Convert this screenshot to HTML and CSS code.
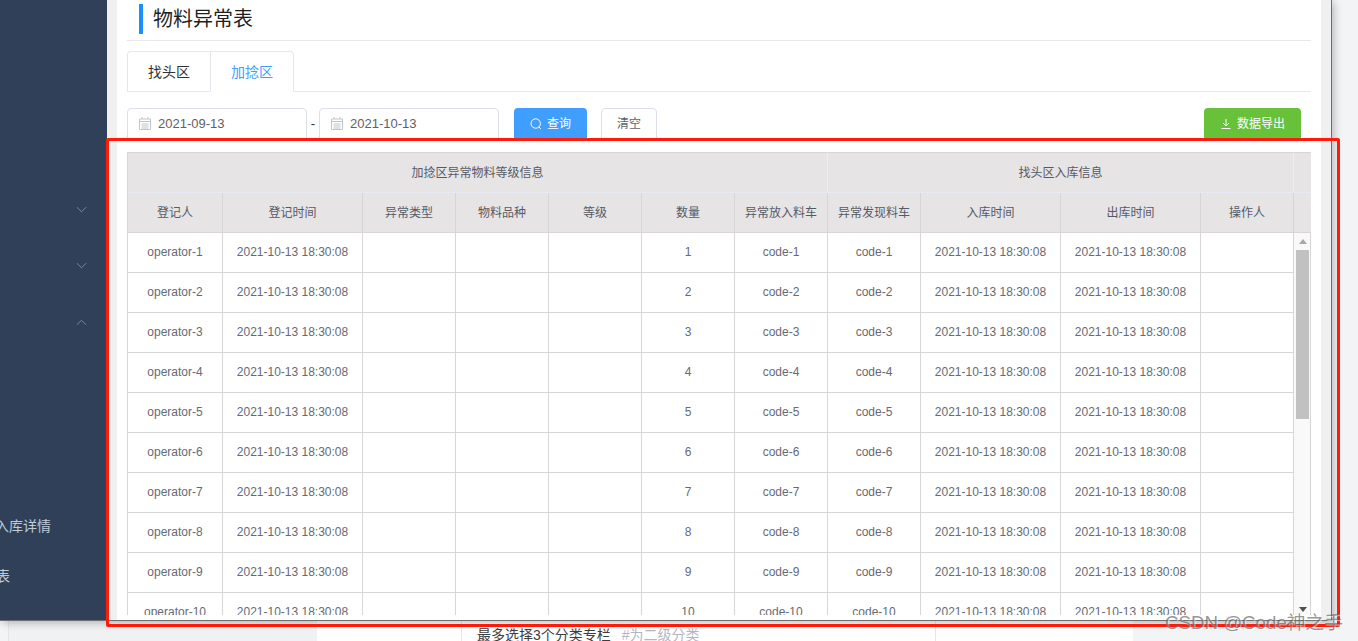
FILE: index.html
```html
<!DOCTYPE html>
<html lang="zh-CN">
<head>
<meta charset="utf-8">
<title>物料异常表</title>
<link rel="stylesheet" href="styles.css">
</head>
<body>
<div class="window">
  <aside class="sidebar">
    <div class="menu-row"><svg class="chev" viewBox="0 0 12 7"><path d="M1 1l5 5 5-5"/></svg></div>
    <div class="menu-row"><svg class="chev" viewBox="0 0 12 7"><path d="M1 1l5 5 5-5"/></svg></div>
    <div class="menu-row"><svg class="chev" viewBox="0 0 12 7"><path d="M1 6l5-5 5 5"/></svg></div>
    <div class="menu-spacer"></div>
    <div class="sub-row sub-long">入库详情</div>
    <div class="sub-row sub-short">表</div>
  </aside>
  <main class="panel">
    <div class="title-bar"><h1 class="title">物料异常表</h1></div>
    <div class="tabs">
      <div class="tab">找头区</div>
      <div class="tab tab-active">加捻区</div>
    </div>
    <div class="filters">
      <div class="date-input">
        <svg class="cal" viewBox="0 0 12 13"><path d="M.5 2h11v10.500h-11zM.5 4.500h11M3 0v2M9 0v2M2.500 7h7M2.500 9h7M2.500 11h7"/></svg>
        <span>2021-09-13</span>
      </div>
      <span class="dash">-</span>
      <div class="date-input">
        <svg class="cal" viewBox="0 0 12 13"><path d="M.5 2h11v10.500h-11zM.5 4.500h11M3 0v2M9 0v2M2.500 7h7M2.500 9h7M2.500 11h7"/></svg>
        <span>2021-10-13</span>
      </div>
      <button class="btn btn-primary"><svg class="btn-icon" viewBox="0 0 12 12"><circle cx="5.700" cy="5.500" r="4.700"/><path d="M9 9l1.800 2"/></svg>查询</button>
      <button class="btn btn-plain">清空</button>
      <button class="btn btn-success"><svg class="btn-icon" viewBox="0 0 12 12"><path d="M6 1v6.500M3 5l3 3 3-3M1.500 10.500h9"/></svg>数据导出</button>
    </div>
    <div class="grid">
      <table class="tbl tbl-head">
        <colgroup>
          <col class="c-op"><col class="c-time"><col class="c-n"><col class="c-n"><col class="c-n"><col class="c-n"><col class="c-n"><col class="c-n"><col class="c-time"><col class="c-time"><col class="c-n"><col class="c-gut">
        </colgroup>
        <tr class="group-row">
          <th colspan="7">加捻区异常物料等级信息</th>
          <th colspan="4">找头区入库信息</th>
          <th></th>
        </tr>
        <tr>
          <th>登记人</th><th>登记时间</th><th>异常类型</th><th>物料品种</th><th>等级</th><th>数量</th><th>异常放入料车</th><th>异常发现料车</th><th>入库时间</th><th>出库时间</th><th>操作人</th><th class="gut-cell"></th>
        </tr>
      </table>
      <div class="body-wrap">
        <table class="tbl tbl-body">
          <colgroup>
            <col class="c-op"><col class="c-time"><col class="c-n"><col class="c-n"><col class="c-n"><col class="c-n"><col class="c-n"><col class="c-n"><col class="c-time"><col class="c-time"><col class="c-n">
          </colgroup>
          <tr><td>operator-1</td><td>2021-10-13 18:30:08</td><td></td><td></td><td></td><td>1</td><td>code-1</td><td>code-1</td><td>2021-10-13 18:30:08</td><td>2021-10-13 18:30:08</td><td></td></tr>
          <tr><td>operator-2</td><td>2021-10-13 18:30:08</td><td></td><td></td><td></td><td>2</td><td>code-2</td><td>code-2</td><td>2021-10-13 18:30:08</td><td>2021-10-13 18:30:08</td><td></td></tr>
          <tr><td>operator-3</td><td>2021-10-13 18:30:08</td><td></td><td></td><td></td><td>3</td><td>code-3</td><td>code-3</td><td>2021-10-13 18:30:08</td><td>2021-10-13 18:30:08</td><td></td></tr>
          <tr><td>operator-4</td><td>2021-10-13 18:30:08</td><td></td><td></td><td></td><td>4</td><td>code-4</td><td>code-4</td><td>2021-10-13 18:30:08</td><td>2021-10-13 18:30:08</td><td></td></tr>
          <tr><td>operator-5</td><td>2021-10-13 18:30:08</td><td></td><td></td><td></td><td>5</td><td>code-5</td><td>code-5</td><td>2021-10-13 18:30:08</td><td>2021-10-13 18:30:08</td><td></td></tr>
          <tr><td>operator-6</td><td>2021-10-13 18:30:08</td><td></td><td></td><td></td><td>6</td><td>code-6</td><td>code-6</td><td>2021-10-13 18:30:08</td><td>2021-10-13 18:30:08</td><td></td></tr>
          <tr><td>operator-7</td><td>2021-10-13 18:30:08</td><td></td><td></td><td></td><td>7</td><td>code-7</td><td>code-7</td><td>2021-10-13 18:30:08</td><td>2021-10-13 18:30:08</td><td></td></tr>
          <tr><td>operator-8</td><td>2021-10-13 18:30:08</td><td></td><td></td><td></td><td>8</td><td>code-8</td><td>code-8</td><td>2021-10-13 18:30:08</td><td>2021-10-13 18:30:08</td><td></td></tr>
          <tr><td>operator-9</td><td>2021-10-13 18:30:08</td><td></td><td></td><td></td><td>9</td><td>code-9</td><td>code-9</td><td>2021-10-13 18:30:08</td><td>2021-10-13 18:30:08</td><td></td></tr>
          <tr><td>operator-10</td><td>2021-10-13 18:30:08</td><td></td><td></td><td></td><td>10</td><td>code-10</td><td>code-10</td><td>2021-10-13 18:30:08</td><td>2021-10-13 18:30:08</td><td></td></tr>
        </table>
        <div class="scrollbar">
          <div class="arrow-up"></div>
          <div class="thumb"></div>
          <div class="arrow-down"></div>
        </div>
      </div>
    </div>
  </main>
  <div class="gutter-right"></div>
</div>
<div class="under">
  <div class="under-left"></div>
  <div class="under-mid">
    <div class="under-cell"><span class="under-text">最多选择3个分类专栏</span><span class="under-hint">#为二级分类</span></div>
  </div>
  <div class="under-right"></div>
</div>
<div class="red-box"></div>
<div class="watermark">CSDN @Code神之手</div>
</body>
</html>
```
FILE: styles.css
```css
* { box-sizing: border-box; }
html, body { margin: 0; padding: 0; height: 641px; overflow: hidden; }
body {
  position: relative;
  background: #f3f4f6;
  font-family: "Liberation Sans", "Noto Sans CJK SC", sans-serif;
  color: #606266;
}
.window {
  display: flex;
  width: 1332px;
  height: 621px;
  background: #f0f0f0;
  border-right: 1px solid #6f6f6f;
  border-bottom: 1px solid #6f6f6f;
  box-shadow: 2px 2px 8px rgba(0, 0, 0, .25);
  position: relative;
  z-index: 1;
}
.sidebar {
  width: 107px;
  flex: none;
  background: #304058;
  padding-top: 181px;
  display: flex;
  flex-direction: column;
  overflow: hidden;
  color: #bfcbd9;
  font-size: 14px;
}
.menu-row {
  height: 56.500px;
  flex: none;
  display: flex;
  align-items: center;
  justify-content: flex-end;
  padding-right: 20px;
}
.chev { width: 11px; height: 7px; fill: none; stroke: #8090a2; stroke-width: 1; }
.menu-spacer { height: 149px; flex: none; }
.sub-row {
  height: 50px;
  flex: none;
  display: flex;
  align-items: center;
  justify-content: flex-end;
  white-space: nowrap;
}
.sub-long { padding-right: 56px; }
.sub-short { padding-right: 97px; }
.panel {
  width: 1204px;
  flex: none;
  margin-left: 10px;
  padding: 0 10px;
  background: #fff;
  min-width: 0;
}
.gutter-right { flex: 1; }
.title-bar {
  height: 41px;
  padding: 4px 0 0 12px;
  border-bottom: 1px solid #e8e8e8;
}
.title {
  margin: 0;
  height: 30px;
  line-height: 30px;
  font-size: 20px;
  font-weight: 400;
  color: #1f1f1f;
  padding-left: 10px;
  border-left: 4px solid #1890ff;
}
.tabs {
  display: flex;
  margin-top: 10px;
  height: 41px;
  border-bottom: 1px solid #e4e7ed;
}
.tab {
  width: 83px;
  height: 41px;
  line-height: 41px;
  text-align: center;
  font-size: 14px;
  color: #303133;
  border: 1px solid #e4e7ed;
  border-right: 0;
  border-bottom: 1px solid #e4e7ed;
}
.tab:first-child { border-top-left-radius: 4px; }
.tab-active {
  width: 84px;
  color: #409eff;
  border-right: 1px solid #e4e7ed;
  border-bottom-color: #fff;
  border-top-right-radius: 4px;
}
.filters {
  display: flex;
  align-items: flex-start;
  margin-top: 16px;
  height: 30px;
  overflow: hidden;
}
.date-input {
  width: 180px;
  height: 40px;
  flex: none;
  display: flex;
  align-items: flex-start;
  padding: 7px 0 0 11px;
  border: 1px solid #dcdfe6;
  border-radius: 4px;
  font-size: 13px;
  line-height: 15px;
  color: #606266;
}
.cal {
  width: 12px;
  height: 13px;
  margin: 1px 7px 0 0;
  fill: none;
  stroke: #c0c4cc;
  stroke-width: 1;
}
.dash {
  width: 12px;
  flex: none;
  text-align: center;
  font-size: 13px;
  line-height: 32px;
  color: #303133;
}
.btn {
  height: 40px;
  flex: none;
  display: flex;
  align-items: flex-start;
  justify-content: center;
  padding: 8px 0 0;
  border-radius: 4px;
  font-family: inherit;
  font-size: 12px;
  line-height: 14px;
  border: 1px solid transparent;
}
.btn-primary { width: 73px; margin-left: 15px; background: #409eff; color: #fff; }
.btn-plain { width: 56px; margin-left: 14px; background: #fff; color: #606266; border-color: #dcdfe6; }
.btn-success { width: 97px; margin-left: auto; margin-right: 10px; background: #67c23a; color: #fff; }
.btn-icon {
  width: 12px;
  height: 12px;
  margin: 1px 5px 0 0;
  fill: none;
  stroke: #fff;
  stroke-width: 1;
}
.grid {
  width: 1184px;
  margin-top: 14px;
  border-left: 1px solid #d8d5d7;
  border-right: 1px solid #d8d5d7;
  border-top: 1px solid #d8d5d7;
}
.tbl {
  border-collapse: separate;
  border-spacing: 0;
  table-layout: fixed;
  font-size: 12px;
}
.tbl-head { width: 1182px; }
.tbl-body { width: 1166px; flex: none; }
.c-op { width: 95px; }
.c-time { width: 140px; }
.c-n { width: 93px; }
.c-gut { width: 17px; }
.tbl th, .tbl td {
  padding: 0 0 2px;
  height: 40px;
  text-align: center;
  font-weight: 400;
  overflow: hidden;
  white-space: nowrap;
  border-right: 1px solid #d8d5d7;
  border-bottom: 1px solid #d8d5d7;
}
.tbl th { background: #e6e4e5; color: #565a66; }
.group-row th { border-right-color: #eceef6; border-bottom-color: #e6e9f3; }
.tbl th:last-child { border-right: 0; }
.tbl td { color: #666a73; background: #fff; }
.body-wrap {
  display: flex;
  height: 382px;
  overflow: hidden;
}
.scrollbar {
  width: 16px;
  flex: none;
  background: #f9f9f9;
  padding: 6px 1px 0 2px;
  display: flex;
  flex-direction: column;
  align-items: center;
  margin-left: auto;
}
.arrow-up {
  width: 0;
  height: 0;
  border-left: 4px solid transparent;
  border-right: 4px solid transparent;
  border-bottom: 5px solid #a8a8a8;
}
.thumb {
  width: 13px;
  height: 169px;
  background: #c1c1c1;
  margin-top: 6px;
}
.arrow-down {
  width: 0;
  height: 0;
  margin-top: 188px;
  border-left: 4px solid transparent;
  border-right: 4px solid transparent;
  border-top: 5px solid #505050;
}
.under {
  display: flex;
  height: 20px;
  overflow: hidden;
}
.under-left {
  width: 309px;
  flex: none;
  background: #f0f1f3;
  border-left: 1px solid #e4e4e4;
  margin-left: 8px;
}
.under-mid {
  width: 816px;
  flex: none;
  background: #fff;
  padding-left: 144px;
}
.under-cell {
  width: 475px;
  height: 20px;
  border-left: 1px solid #e8e8e8;
  border-right: 1px solid #e8e8e8;
  padding: 6px 0 0 15px;
  font-size: 14px;
  line-height: 16px;
  white-space: nowrap;
}
.under-text { color: #3d3d3d; }
.under-hint { color: #b5b5c0; margin-left: 11px; }
.under-right { flex: 1; }
.red-box {
  position: absolute;
  left: 106px;
  top: 138px;
  width: 1234px;
  height: 489px;
  border: 3px solid #ff1a0a;
  border-radius: 2px;
  z-index: 2;
}
.watermark {
  position: absolute;
  left: 1165px;
  top: 611px;
  font-size: 18.700px;
  line-height: 24px;
  white-space: nowrap;
  color: rgba(90, 90, 90, .65);
  text-shadow: 1px 1px 1px rgba(255, 255, 255, .6);
  z-index: 3;
}
```
